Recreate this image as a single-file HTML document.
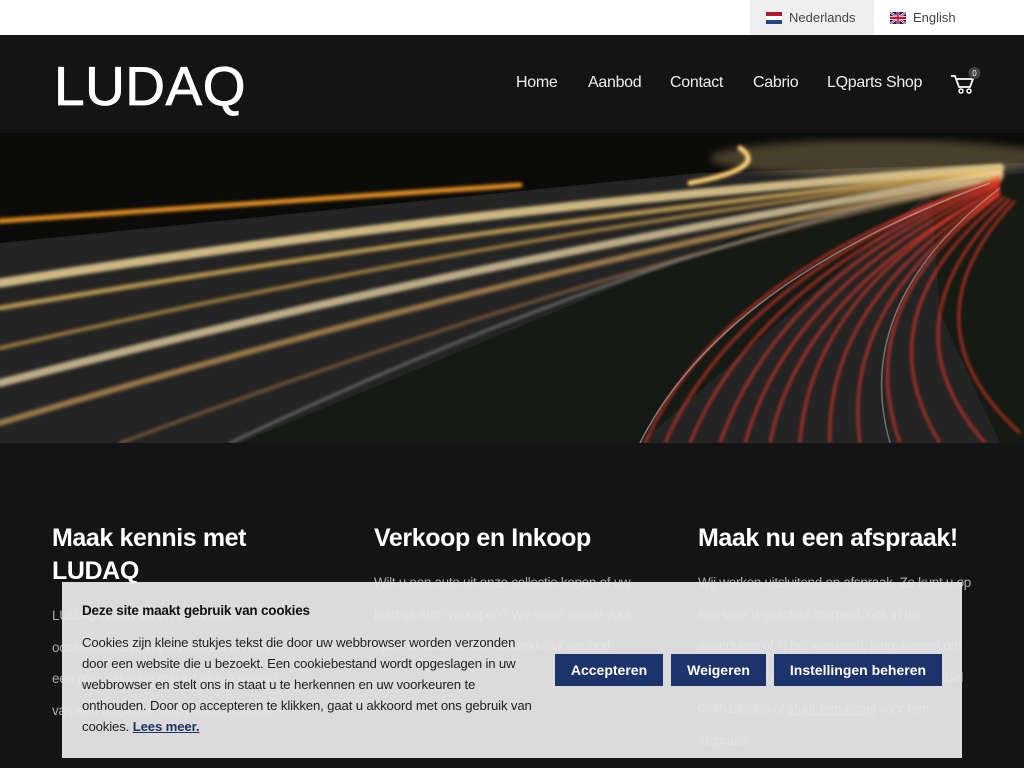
<!DOCTYPE html>
<html><head><meta charset="utf-8"><style>
*{margin:0;padding:0;box-sizing:border-box}
body{width:1024px;height:768px;overflow:hidden;background:#141414;font-family:"Liberation Sans",sans-serif;position:relative}
.top{height:35px;background:#fff;position:relative}
.lang{position:absolute;top:0;height:35px;font-size:13px;color:#444;display:flex;align-items:center;gap:7px;padding:0 16px}
.nl{left:750px;width:124px;background:#efefef}
.en{left:874px}
.flag{width:16px;height:12px;display:inline-block}
header{height:98px;background:#141414;position:relative}
.logo{position:absolute;left:54px;top:19px;color:#fff;font-size:55px;line-height:64px;-webkit-text-stroke:.8px #fff;letter-spacing:.5px}
.nav{position:absolute;top:39px;color:#eee;font-size:16px;letter-spacing:-.3px}
.hero{height:310px;position:relative;overflow:hidden;background:#0c0c0c}
.col{position:absolute;color:#fff}
.col h2{font-size:25px;font-weight:bold;line-height:33px;letter-spacing:-.4px}
.col p{font-size:13.5px;color:#aaa;line-height:31.5px;margin-top:12px;letter-spacing:-.3px}
.ck{position:absolute;left:62px;top:582px;width:900px;height:176px;background:rgba(230,230,230,.95)}
.ck h4{position:absolute;left:20px;top:21px;font-size:13.5px;color:#111;letter-spacing:-.2px}
.ck p{position:absolute;left:20px;top:50px;width:490px;font-size:13.2px;line-height:21px;color:#222;letter-spacing:-.15px;white-space:nowrap}
.ck a{color:#1e3366;font-weight:bold;text-decoration:underline}
.btn{position:absolute;top:72px;height:32px;background:#1d336b;color:#fff;font-weight:bold;font-size:14px;display:flex;align-items:center;justify-content:center}
</style></head><body>
<div class="top">
<div class="lang nl"><svg class="flag" viewBox="0 0 3 3" preserveAspectRatio="none"><rect width="3" height="1" fill="#ae1c28"/><rect y="1" width="3" height="1" fill="#fff"/><rect y="2" width="3" height="1" fill="#21468b"/></svg>Nederlands</div>
<div class="lang en"><svg class="flag" viewBox="0 0 60 30" preserveAspectRatio="none"><rect width="60" height="30" fill="#012169"/><path d="M0 0L60 30M60 0L0 30" stroke="#fff" stroke-width="6"/><path d="M0 0L60 30M60 0L0 30" stroke="#c8102e" stroke-width="2"/><path d="M30 0V30M0 15H60" stroke="#fff" stroke-width="10"/><path d="M30 0V30M0 15H60" stroke="#c8102e" stroke-width="6"/></svg>English</div>
</div>
<header>
<div class="logo">LUDAQ</div>
<span class="nav" style="left:516px">Home</span>
<span class="nav" style="left:588px">Aanbod</span>
<span class="nav" style="left:670px">Contact</span>
<span class="nav" style="left:753px">Cabrio</span>
<span class="nav" style="left:827px">LQparts Shop</span>
<svg style="position:absolute;left:950px;top:31px" width="34" height="30" viewBox="0 0 34 30"><path d="M1 10h4l4 11h11l3-8H7" fill="none" stroke="#fff" stroke-width="1.8"/><circle cx="11" cy="25" r="2" fill="none" stroke="#fff" stroke-width="1.5"/><circle cx="19" cy="25" r="2" fill="none" stroke="#fff" stroke-width="1.5"/><circle cx="24.5" cy="7" r="6" fill="#444"/><text x="24.5" y="10" font-size="8" fill="#fff" text-anchor="middle" font-family="Liberation Sans">0</text></svg>
</header>
<div class="hero">
<svg width="1024" height="310" viewBox="0 0 1024 310">
<defs><filter id="b"><feGaussianBlur stdDeviation="1.5"/></filter><filter id="b2"><feGaussianBlur stdDeviation="4"/></filter></defs>
<rect width="1024" height="310" fill="#0b0b0a"/>
<polygon points="0,110 700,40 1024,30 1024,310 0,310" fill="#242424"/>
<polygon points="240,310 840,60 940,50 640,310" fill="#161a14"/>
<polygon points="930,50 1024,40 1024,310 1000,310 940,180" fill="#151a13"/>
<g fill="none" stroke-linecap="round" filter="url(#b)">
<path d="M0 88 L520 52" stroke="#e08a20" stroke-width="5"/>
<path d="M0 150 Q500 70 1000 35" stroke="#f7dc9a" stroke-width="9" opacity=".8"/>
<path d="M0 175 Q500 90 1000 38" stroke="#f0c060" stroke-width="5" opacity=".7"/>
<path d="M0 215 Q500 100 1000 40" stroke="#e8b050" stroke-width="4" opacity=".6"/>
<path d="M0 250 Q500 120 1000 42" stroke="#fde6b0" stroke-width="8" opacity=".7"/>
<path d="M0 290 Q500 140 1000 45" stroke="#e8b060" stroke-width="6" opacity=".6"/>
<path d="M120 310 Q600 130 1000 48" stroke="#d09050" stroke-width="3" opacity=".5"/>
<path d="M230 310 Q650 110 980 50" stroke="#ddd" stroke-width="2" opacity=".5"/>
<path d="M690 50 Q770 35 740 15" stroke="#ffd070" stroke-width="5"/>
</g>
<g fill="none" stroke="#ff3a2a" stroke-width="2" opacity=".9" filter="url(#b)">
<path d="M645 310 Q720 140 1000 45"/><path d="M665 310 Q740 140 1000 45"/><path d="M690 310 Q760 140 1000 48"/><path d="M720 310 Q780 140 1000 50"/><path d="M745 310 Q790 150 1000 52"/><path d="M770 310 Q800 160 1000 55"/><path d="M800 310 Q810 160 1000 55"/><path d="M830 310 Q825 165 1000 58"/><path d="M860 310 Q840 170 1000 60"/><path d="M900 310 Q850 170 1000 62"/><path d="M940 310 Q860 180 1005 64"/><path d="M985 310 Q880 190 1010 66"/><path d="M1020 300 Q900 190 1015 68"/>
</g>
<path d="M640 310 Q720 150 990 50" fill="none" stroke="#bbb" stroke-width="1.5" opacity=".6"/>
<path d="M890 310 Q850 170 1000 55" fill="none" stroke="#bbb" stroke-width="1.5" opacity=".5"/>
<ellipse cx="880" cy="25" rx="170" ry="18" fill="#ffdc90" opacity=".25" filter="url(#b2)"/>
</svg>
</div>
<div class="col" style="left:52px;top:522px;width:240px"><h2>Maak kennis met<br>LUDAQ</h2><p>LUDAQ is een fris en innovatief occasionbedrijf. Wij ondersteunen u op een professionele manier bij het nemen van een volgende stap in automobiliteit.</p></div>
<div class="col" style="left:374px;top:522px;width:275px"><h2>Verkoop en Inkoop</h2><p>Wilt u een auto uit onze collectie kopen of uw huidige auto verkopen? Wij staan overal voor open en doen u een aantrekkelijk aanbod.</p></div>
<div class="col" style="left:698px;top:522px;width:275px"><h2>Maak nu een afspraak!</h2><p>Wij werken uitsluitend op afspraak. Ze kunt u op een voor u geschikt moment, ook in de avonduren of in het weekend, langskomen om een auto te bekijken of een proefrit maken. Bel 0645193805 of <u>stuur een email</u> voor een afspraak.</p></div>
<div class="ck">
<h4>Deze site maakt gebruik van cookies</h4>
<p>Cookies zijn kleine stukjes tekst die door uw webbrowser worden verzonden<br>door een website die u bezoekt. Een cookiebestand wordt opgeslagen in uw<br>webbrowser en stelt ons in staat u te herkennen en uw voorkeuren te<br>onthouden. Door op accepteren te klikken, gaat u akkoord met ons gebruik van<br>cookies. <a>Lees meer.</a></p>
<div class="btn" style="left:493px;width:108px">Accepteren</div>
<div class="btn" style="left:609px;width:95px">Weigeren</div>
<div class="btn" style="left:712px;width:168px">Instellingen beheren</div>
</div>
</body></html>
